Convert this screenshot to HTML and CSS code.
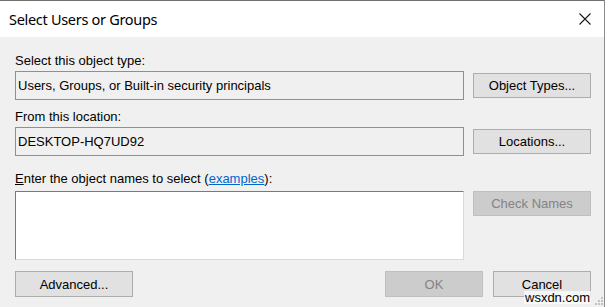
FILE: index.html
```html
<!DOCTYPE html>
<html>
<head>
    <meta charset="utf-8" />
    <title>Select Users or Groups</title>
    <link rel="stylesheet" href="styles.css">
</head>
<body>
    <div class="ablak">
        <header class="fejlec">
            <span class="cim">Select Users or Groups</span>
            <svg class="bezar" width="12" height="12" viewBox="0 0 12 12">
                <path d="M0.5 0.5 L11.5 11.5 M11.5 0.5 L0.5 11.5" stroke="#1a1a1a" stroke-width="1.1" fill="none" />
            </svg>
        </header>
        <div class="tartalom">
            <div class="cimke elso">Select this object type:</div>
            <div class="sor">
                <div class="mezo">Users, Groups, or Built-in security principals</div>
                <button class="gomb">Object Types...</button>
            </div>
            <div class="cimke masodik">From this location:</div>
            <div class="sor">
                <div class="mezo">DESKTOP-HQ7UD92</div>
                <button class="gomb">Locations...</button>
            </div>
            <div class="cimke harmadik"><u>E</u>nter the object names to select (<a href="#" class="link">examples</a>):</div>
            <div class="sor fent">
                <div class="szovegdoboz"></div>
                <button class="gomb tiltott">Check Names</button>
            </div>
            <div class="also">
                <button class="gomb">Advanced...</button>
                <div class="jobb">
                    <button class="gomb kicsi tiltott">OK</button>
                    <button class="gomb kicsi">Cancel</button>
                </div>
            </div>
        </div>
        <div class="vizjel">wsxdn.com</div>
        <svg class="fogo" width="9" height="9" viewBox="0 0 9 9">
            <rect x="6" y="0" width="2" height="2" fill="#c2c2c2" />
            <rect x="3" y="3" width="2" height="2" fill="#c2c2c2" />
            <rect x="6" y="3" width="2" height="2" fill="#c2c2c2" />
            <rect x="0" y="6" width="2" height="2" fill="#c2c2c2" />
            <rect x="3" y="6" width="2" height="2" fill="#c2c2c2" />
            <rect x="6" y="6" width="2" height="2" fill="#c2c2c2" />
        </svg>
    </div>
</body>
</html>
```

FILE: styles.css
```css
body {
    margin: 0;
    background-color: #ffffff;
    font-family: "Liberation Sans", Arial, sans-serif;
    font-size: 13px;
    color: #000000;
}

.ablak {
    position: relative;
    width: 605px;
    height: 307px;
    border-top: 1px solid #6f6f6f;
    border-right: 1px solid #8c8c8c;
    box-sizing: border-box;
    background-color: #f0f0f0;
}

.fejlec {
    height: 36px;
    background-color: #ffffff;
    display: flex;
    align-items: center;
    justify-content: space-between;
    padding: 0 13px 0 9px;
}

.cim {
    font-family: "Noto Sans", sans-serif;
    font-size: 14.5px;
    letter-spacing: -0.3px;
    color: #000000;
    margin-top: -1px;
}

.tartalom {
    padding: 16px 0 0 15px;
}

.cimke {
    line-height: 15px;
    height: 15px;
}

.masodik {
    margin-top: 9px;
}

.harmadik {
    margin-top: 15px;
}

.link {
    color: #0066cc;
}

.sor {
    display: flex;
    align-items: center;
    gap: 9px;
    margin-top: 3px;
}

.sor.fent {
    align-items: flex-start;
    margin-top: 5px;
}

.mezo {
    width: 449px;
    height: 29px;
    box-sizing: border-box;
    border: 1px solid #8f8f8f;
    padding-left: 2px;
    display: flex;
    align-items: center;
}

.szovegdoboz {
    width: 449px;
    height: 69px;
    box-sizing: border-box;
    background-color: #ffffff;
    border-top: 1px solid #7a7a7a;
    border-left: 1px solid #7a7a7a;
    border-right: 1px solid #d9d9d9;
    border-bottom: 1px solid #d9d9d9;
}

.gomb {
    width: 118px;
    height: 25px;
    box-sizing: border-box;
    background-color: #e1e1e1;
    border: 1px solid #adadad;
    font-family: "Liberation Sans", Arial, sans-serif;
    font-size: 13px;
    color: #000000;
    padding: 0;
}

.tiltott {
    background-color: #cccccc;
    border-color: #bfbfbf;
    color: #838383;
}

.kicsi {
    width: 98px;
    height: 26px;
}

.also {
    display: flex;
    justify-content: space-between;
    width: 576px;
    margin-top: 11px;
}

.also > .gomb {
    height: 26px;
}

.jobb {
    display: flex;
    gap: 10px;
}

.vizjel {
    position: absolute;
    left: 524px;
    top: 290px;
    font-size: 13px;
    line-height: 13px;
    background-color: rgba(255, 255, 255, 0.7);
    padding: 0 1px;
}

.fogo {
    position: absolute;
    left: 595px;
    top: 296px;
}
```
